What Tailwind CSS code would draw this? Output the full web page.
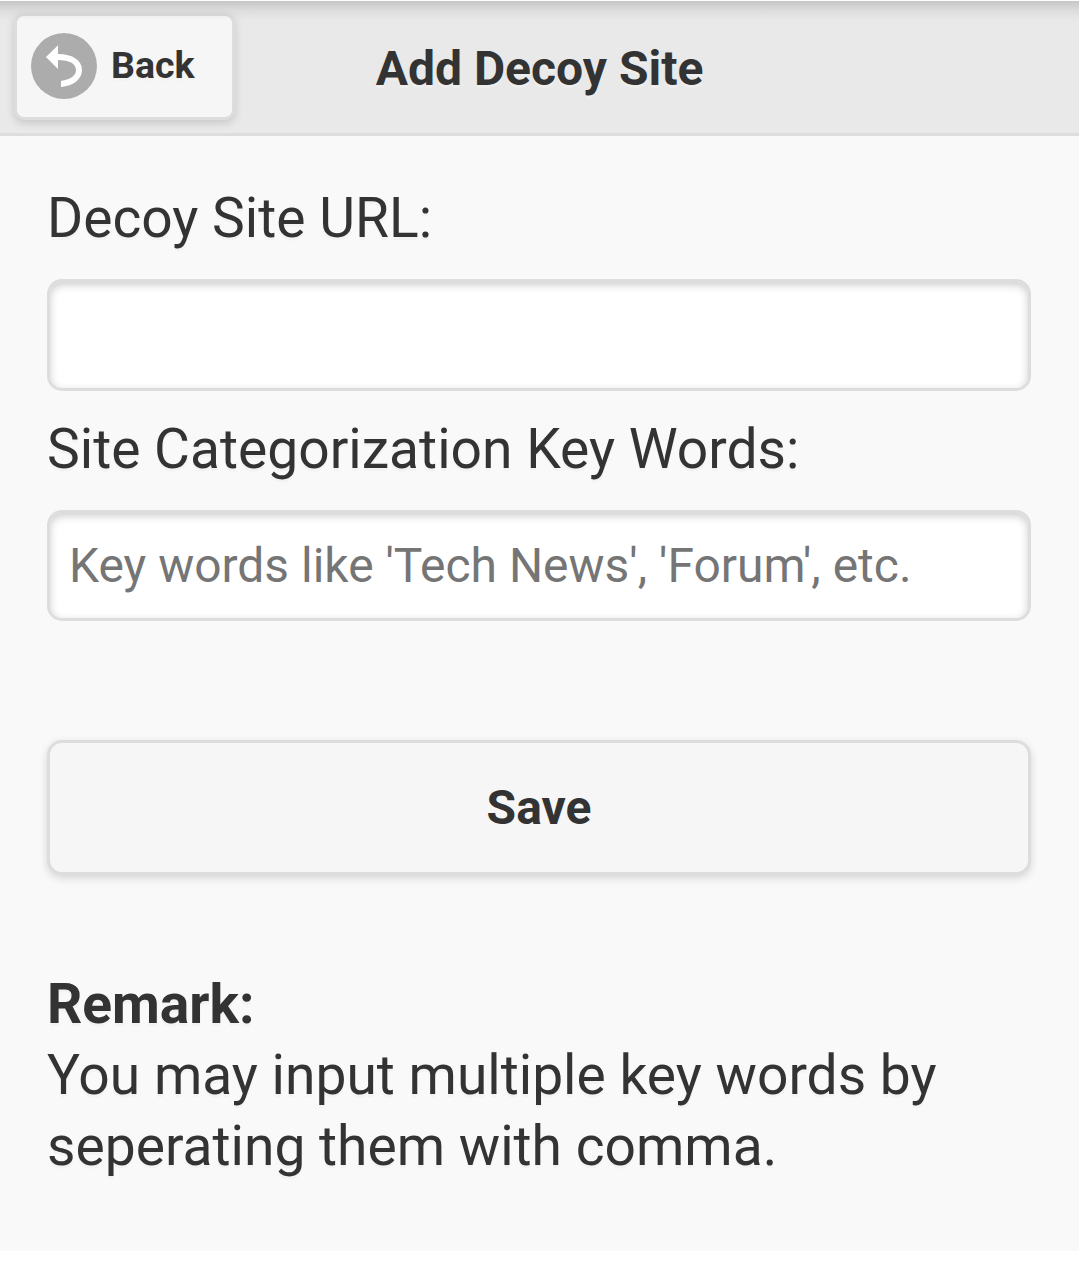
<!DOCTYPE html>
<html lang="en">
<head>
<meta charset="utf-8">
<title>Add Decoy Site</title>
<script src="https://cdn.jsdelivr.net/npm/@tailwindcss/browser@4"></script>
</head>
<body class="bg-white font-[Roboto,sans-serif] text-[#333]">
<div class="flex h-[1276px] w-[1079px] flex-col overflow-hidden pt-px [text-shadow:0_3px_0_#f3f3f3]">
  <header class="relative grid h-[135px] shrink-0 grid-cols-[1fr_auto_1fr] items-start border-b-[3px] border-[#ddd] bg-[#e9e9e9] px-[14px] pt-[12px] [text-shadow:0_3px_0_#eee]">
    <button class="flex h-[107px] w-[221px] items-center gap-[14px] rounded-[10px] border-[3px] border-[#ddd] bg-[#f6f6f6] pb-[2px] pl-[14px] text-[37.5px] font-bold shadow-[0_3px_9px_rgba(0,0,0,0.15)] [text-shadow:0_3px_0_#f3f3f3]">
      <svg class="size-[66px]" viewBox="0 0 66 66"><circle cx="33" cy="33" r="33" fill="#acacac"/><path d="M15 24 27 12.3V21C42 21 51 27.5 51 37C51 46.500 42 53 30 54V48C39 46.500 45 43 45 37C45 30.500 38 27 27 27V36Z" fill="#fff"/></svg>
      <span>Back</span>
    </button>
    <h1 class="pt-[20px] text-[48px] leading-[72px] font-bold">Add Decoy Site</h1>
    <div class="pointer-events-none absolute inset-x-0 top-0 h-[20px] bg-linear-to-b from-black/15 via-black/5 to-transparent"></div>
  </header>
  <main class="flex h-[1115px] shrink-0 flex-col bg-[#f9f9f9] px-[47px] pt-[47px] text-[55.15px] leading-[71px]">
    <label for="url">Decoy Site URL:</label>
    <input id="url" class="mt-[25px] h-[112px] w-[984px] rounded-[15px] border-[3px] border-[#ddd] bg-white px-[19px] text-[48px] shadow-[inset_0_3px_9px_rgba(0,0,0,0.2)]">
    <label for="words" class="mt-[23px]">Site Categorization Key Words:</label>
    <input id="words" placeholder="Key words like 'Tech News', 'Forum', etc." class="mt-[25px] h-[111px] w-[984px] rounded-[15px] border-[3px] border-[#ddd] bg-white px-[19px] text-[47.95px] shadow-[inset_0_3px_9px_rgba(0,0,0,0.2)] placeholder:text-[#757575]">
    <button class="mt-[119px] h-[135px] w-[984px] rounded-[15px] border-[3px] border-[#ddd] bg-[#f6f6f6] pb-px text-[48px] font-bold shadow-[0_3px_9px_rgba(0,0,0,0.15)]">Save</button>
    <p class="mt-[94px]"><b>Remark:</b><br>You may input multiple key words by<br>seperating them with comma.</p>
  </main>
</div>
</body>
</html>
